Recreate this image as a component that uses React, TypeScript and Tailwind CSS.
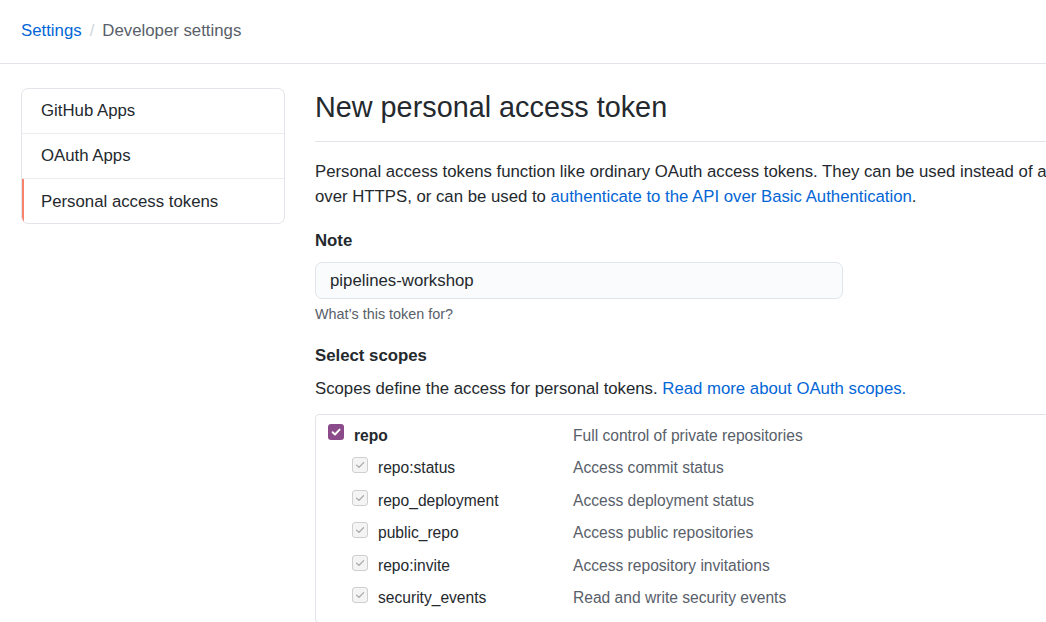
import React from "react";

const scopes = [
  { name: "repo", desc: "Full control of private repositories", main: true },
  { name: "repo:status", desc: "Access commit status" },
  { name: "repo_deployment", desc: "Access deployment status" },
  { name: "public_repo", desc: "Access public repositories" },
  { name: "repo:invite", desc: "Access repository invitations" },
  { name: "security_events", desc: "Read and write security events" },
];

function MainCheck() {
  return (
    <span className="mb-[6px] mr-[10px] flex h-[16px] w-[16px] shrink-0 items-center justify-center rounded-[3px] bg-[#8b4b8a]">
      <svg width="12" height="12" viewBox="0 0 12 12" fill="none">
        <path d="M2.6 6.2 L5 8.5 L9.6 3.6" stroke="#ffffff" strokeWidth="1.9" strokeLinecap="round" strokeLinejoin="round" />
      </svg>
    </span>
  );
}

function SubCheck() {
  return (
    <span className="mb-[5px] mr-[10px] flex h-[16px] w-[16px] shrink-0 items-center justify-center rounded-[3px] border border-[#cfcfcf] bg-[#f4f4f4]">
      <svg width="12" height="12" viewBox="0 0 12 12" fill="none">
        <path d="M2.6 6.1 L5 8.4 L9.6 3.6" stroke="#a8a8a8" strokeWidth="1.3" strokeLinecap="round" strokeLinejoin="round" />
      </svg>
    </span>
  );
}

export default function App() {
  return (
    <div
      className="h-[622px] w-[1046px] overflow-hidden bg-white text-[#24292e]"
      style={{ fontFamily: '"Liberation Sans", Arial, Helvetica, sans-serif' }}
    >
      <div className="w-[1300px]">
        <header className="h-[64px] border-b border-[#e1e4e8] pl-[21px] pt-[18px]">
          <div className="flex text-[16.8px] leading-[25px]">
            <a className="text-[#0366d6]">Settings</a>
            <span className="mx-[8px] text-[#d1d5da]">/</span>
            <span className="text-[#586069]">Developer settings</span>
          </div>
        </header>

        <div className="flex pt-[24px]">
          <nav className="ml-[21px] h-[136px] w-[264px] shrink-0 overflow-hidden rounded-[7px] border border-[#e1e4e8] text-[16.8px]">
            <div className="flex h-[45px] items-center border-b border-[#eaecef] pl-[19px]">GitHub Apps</div>
            <div className="flex h-[45px] items-center border-b border-[#eaecef] pl-[19px]">OAuth Apps</div>
            <div className="relative flex h-[45px] items-center pl-[19px] before:absolute before:left-0 before:top-0 before:h-full before:w-[2px] before:bg-[#f9826c] before:content-['']">
              Personal access tokens
            </div>
          </nav>

          <main className="ml-[30px] w-[880px] shrink-0">
            <div className="mt-[1px] border-b border-[#e1e4e8] pb-[16px]">
              <h1 className="text-[28.8px] font-normal leading-[36px]">New personal access token</h1>
            </div>

            <p className="mt-[17px] text-[16.75px] leading-[25.2px]">
              Personal access tokens function like ordinary OAuth access tokens. They can be used instead of a password for Git over HTTPS, or can be used to{" "}
              <a className="text-[#0366d6]">authenticate to the API over Basic Authentication</a>.
            </p>

            <div className="mt-[19px] text-[16.8px] font-bold leading-[25.2px]">Note</div>
            <div className="mt-[8.4px] flex h-[37px] w-[528px] items-center rounded-[7px] border border-[#e1e4e8] bg-[#fafbfc] pl-[14px] text-[16.8px]">
              pipelines-workshop
            </div>
            <div className="mt-[5px] text-[14.4px] leading-[21.6px] text-[#586069]">What’s this token for?</div>

            <div className="mt-[17px] text-[16.8px] font-bold leading-[25.2px]">Select scopes</div>
            <p className="mt-[8px] text-[16.75px] leading-[25.2px]">
              Scopes define the access for personal tokens.{" "}
              <a className="text-[#0366d6]">Read more about OAuth scopes.</a>
            </p>

            <div className="mt-[13px] rounded-[4px] border border-[#e1e4e8] pb-[8px] pt-[4px] text-[15.6px]">
              {scopes.map((s) => (
                <div key={s.name} className="flex h-[32.5px] items-center">
                  <div className={"flex w-[257px] items-center " + (s.main ? "pl-[12px]" : "pl-[36px]")}>
                    {s.main ? <MainCheck /> : <SubCheck />}
                    <span className={s.main ? "font-bold" : ""}>{s.name}</span>
                  </div>
                  <div className="text-[#586069]">{s.desc}</div>
                </div>
              ))}
            </div>
          </main>
        </div>
      </div>
    </div>
  );
}
